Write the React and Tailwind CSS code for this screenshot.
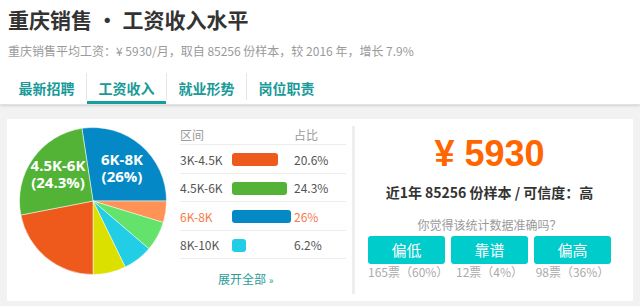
import React from 'react';

const font = { fontFamily: '"Noto Sans CJK SC", "Noto Sans", sans-serif' };

const slices = [
  { from: -8.7, to: 90, color: '#0589c6' },
  { from: 90, to: 107, color: '#ff9254' },
  { from: 107, to: 130.5, color: '#63e26c' },
  { from: 130.5, to: 154, color: '#22cde6' },
  { from: 154, to: 180, color: '#dbe000' },
  { from: 180, to: 259, color: '#ee5a1c' },
  { from: 259, to: 351.3, color: '#52b336' },
];

const rows = [
  { label: '3K-4.5K', pct: 20.6, color: 'bg-[#ee5a1c]' },
  { label: '4.5K-6K', pct: 24.3, color: 'bg-[#52b336]' },
  { label: '6K-8K', pct: 26, color: 'bg-[#0589c6]', active: true },
  { label: '8K-10K', pct: 6.2, color: 'bg-[#22cde6]' },
];

const votes = [
  { label: '偏低', count: '165票（60%）' },
  { label: '靠谱', count: '12票（4%）' },
  { label: '偏高', count: '98票（36%）' },
];

function point(cx, cy, r, deg) {
  const a = (deg * Math.PI) / 180;
  return [cx + r * Math.sin(a), cy - r * Math.cos(a)];
}

function Pie() {
  const cx = 86;
  const cy = 82;
  const r = 73.5;
  return (
    <div className="relative h-[182px] w-[173px]">
      <svg width="173" height="182" viewBox="0 0 173 182">
        {slices.map((s) => {
          const [x1, y1] = point(cx, cy, r, s.from);
          const [x2, y2] = point(cx, cy, r, s.to);
          const large = s.to - s.from > 180 ? 1 : 0;
          return (
            <path
              key={s.from}
              d={`M${cx} ${cy} L${x1} ${y1} A${r} ${r} 0 ${large} 1 ${x2} ${y2} Z`}
              fill={s.color}
              stroke="#fff"
              strokeWidth="0.5"
            />
          );
        })}
      </svg>
      <div
        className="absolute left-[84px] top-[32px] w-[62px] text-center text-[15px] leading-[17px] font-bold text-white"
        style={{ fontFamily: '"Open Sans", sans-serif' }}
      >
        <div>6K-8K</div>
        <div>(26%)</div>
      </div>
      <div
        className="absolute left-[18px] top-[38px] w-[66px] text-center text-[15px] leading-[17px] font-bold text-white"
        style={{ fontFamily: '"Open Sans", sans-serif' }}
      >
        <div>4.5K-6K</div>
        <div>(24.3%)</div>
      </div>
    </div>
  );
}

export default function App() {
  return (
    <div className="w-[640px] h-[306px] overflow-hidden bg-[#f2f2f2]" style={font}>
      <header className="h-[105px] bg-white border-b border-[#e2e2e2] shadow-sm">
        <h1 className="pl-[8px] pt-[4px] text-[21px] leading-[30px] font-bold text-[#333]">
          重庆销售 • 工资收入水平
        </h1>
        <p className="mt-[7px] pl-[8px] text-[12px] leading-[20px] text-[#9a9a9a]">
          重庆销售平均工资：¥ 5930/月，取自 85256 份样本，较 2016 年，增长 7.9%
        </p>
        <nav className="mt-[11px] flex pl-[7px] text-[14px] font-bold text-[#199a98]">
          {['最新招聘', '工资收入', '就业形势', '岗位职责'].map((t, i) => (
            <React.Fragment key={t}>
              {i > 0 && <span className="mt-[1px] h-[27px] w-px bg-[#e6e6e6]" />}
              <div
                className={
                  i === 1
                    ? 'flex h-[32px] w-[79px] items-center justify-center border-b-[3px] border-[#12a09e] pt-[3px]'
                    : 'flex h-[32px] w-[79px] items-center justify-center'
                }
              >
                {t}
              </div>
            </React.Fragment>
          ))}
        </nav>
      </header>

      <section className="mx-[7px] mt-[14px] flex h-[182px] bg-white">
        <div className="w-[173px] shrink-0">
          <Pie />
        </div>

        <div className="w-[166px] shrink-0 pt-[6px] text-[12px]">
          <div className="grid h-[20px] grid-cols-[52px_62px_1fr] items-center border-b border-[#ececec] text-[#9a9a9a]">
            <span>区间</span>
            <span />
            <span>占比</span>
          </div>
          {rows.map((r) => (
            <div
              key={r.label}
              className={`grid h-[28.5px] grid-cols-[52px_62px_1fr] items-center border-b border-[#ececec] pt-[2px] ${
                r.active ? 'text-[#f7794a]' : 'text-[#555]'
              }`}
            >
              <span>{r.label}</span>
              <span className="flex">
                <span className={`h-[13px] rounded-[3px] ${r.color}`} style={{ width: `${r.pct * 2.25}px` }} />
              </span>
              <span>{r.pct}%</span>
            </div>
          ))}
          <div className="pl-[38px] pt-[12px] leading-[16px] text-[#2a9d9a]">
            展开全部 <span className="text-[10px]">»</span>
          </div>
        </div>

        <div className="my-[7px] ml-[6px] w-[3px] shrink-0 bg-[#eeeeee]" />

        <div className="flex flex-1 flex-col items-center pr-[9px] pt-[15px]">
          <div
            className="text-[36px] leading-[40px] font-bold text-[#ff6600]"
            style={{ fontFamily: '"Liberation Sans", Arial, sans-serif' }}
          >
            ¥ 5930
          </div>
          <div className="mt-[8px] text-[14px] leading-[20px] font-bold text-[#333]">
            近1年 85256 份样本 / 可信度：高
          </div>
          <div className="mt-[15px] text-[12px] leading-[16px] text-[#9a9a9a]">你觉得该统计数据准确吗？</div>
          <div className="mt-[3px] flex gap-[6px]">
            {votes.map((v) => (
              <div key={v.label} className="flex w-[77px] flex-col items-center">
                <button
                  type="button"
                  className="h-[28px] w-full rounded-[3px] bg-[#00cccc] text-[15px] text-white"
                >
                  {v.label}
                </button>
                <span className="text-[12px] leading-[16px] text-[#aaa]">{v.count}</span>
              </div>
            ))}
          </div>
        </div>
      </section>
    </div>
  );
}
